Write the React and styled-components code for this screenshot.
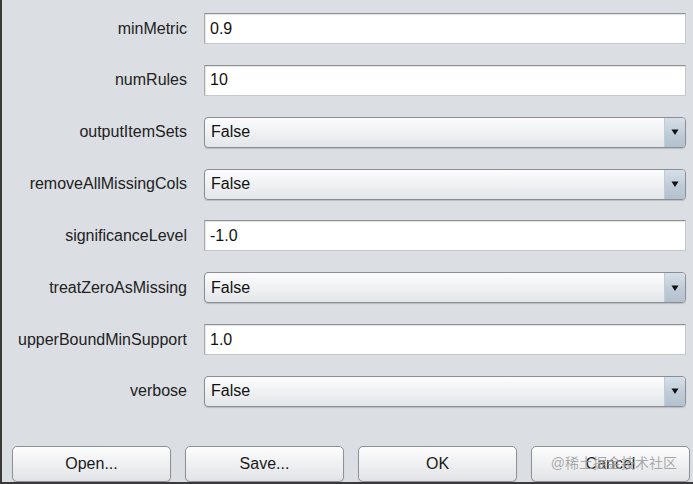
import React from "react";
import styled, { createGlobalStyle } from "styled-components";

const Global = createGlobalStyle`
  html, body {
    margin: 0;
    padding: 0;
    overflow: hidden;
    background: #dbdee3;
  }
  * { box-sizing: border-box; }
`;

const Frame = styled.div`
  position: relative;
  width: 693px;
  height: 484px;
  overflow: hidden;
  background: #dbdee3;
  border-left: 2px solid #3a3a3a;
  border-bottom: 2px solid #3a3a3a;
  font-family: "Liberation Sans", Arial, sans-serif;
  display: flex;
  flex-direction: column;
`;

const Form = styled.div`
  display: grid;
  grid-template-columns: 185px 482px;
  grid-auto-rows: 31px;
  column-gap: 17px;
  row-gap: 20.85px;
  padding-top: 13px;
`;

const Label = styled.div`
  display: flex;
  align-items: center;
  justify-content: flex-end;
  font-size: 16px;
  color: #222;
  white-space: nowrap;
`;

const TextField = styled.div`
  display: flex;
  align-items: center;
  padding-left: 5px;
  background: #fff;
  border: 1px solid #c4c7cc;
  border-top-color: #8e9297;
  border-left-color: #a9adb2;
  box-shadow: inset 1px 1px 1px rgba(0, 0, 0, 0.12);
  font-size: 16px;
  color: #111;
`;

const Combo = styled.div`
  display: flex;
  align-items: stretch;
  border: 1px solid #8a8e94;
  border-radius: 4px;
  background: linear-gradient(#fcfcfd, #eef0f2 55%, #e3e6e9);
  box-shadow: 0 1px 1px rgba(0, 0, 0, 0.15);
  overflow: hidden;
`;

const ComboValue = styled.div`
  flex: 1;
  display: flex;
  align-items: center;
  padding-left: 6px;
  font-size: 16px;
  color: #111;
`;

const ArrowBox = styled.div`
  width: 21px;
  display: flex;
  align-items: center;
  justify-content: center;
  border-left: 1px solid #c3cbd3;
  background: linear-gradient(#d6dfe8, #bfccd8 55%, #b3c1ce);
`;

const ButtonBar = styled.div`
  display: flex;
  gap: 14px;
  padding-left: 10px;
  margin-top: 39px;
`;

const Button = styled.div`
  flex: 0 0 159px;
  height: 36px;
  display: flex;
  align-items: center;
  justify-content: center;
  border: 1px solid #8d9197;
  border-radius: 5px;
  background: linear-gradient(#fdfdfd, #eff0f2 50%, #e1e3e6);
  box-shadow: 0 1px 1px rgba(0, 0, 0, 0.12);
  font-size: 16px;
  color: #1a1a1a;
`;

const Watermark = styled.div`
  position: absolute;
  right: 16px;
  bottom: 10px;
  font-family: "Liberation Sans", "Noto Sans CJK SC", sans-serif;
  font-size: 14px;
  color: rgba(140, 140, 140, 0.75);
  text-shadow: 0 0 1px rgba(255, 255, 255, 0.6);
  pointer-events: none;
`;

const Arrow = () => (
  <svg width="8" height="8" viewBox="0 0 8 8">
    <path d="M0.5 1.5 L7.5 1.5 L4 7 Z" fill="#111" />
  </svg>
);

const fields = [
  { name: "minMetric", kind: "text", value: "0.9" },
  { name: "numRules", kind: "text", value: "10" },
  { name: "outputItemSets", kind: "combo", value: "False" },
  { name: "removeAllMissingCols", kind: "combo", value: "False" },
  { name: "significanceLevel", kind: "text", value: "-1.0" },
  { name: "treatZeroAsMissing", kind: "combo", value: "False" },
  { name: "upperBoundMinSupport", kind: "text", value: "1.0" },
  { name: "verbose", kind: "combo", value: "False" },
];

export default function App() {
  return (
    <>
      <Global />
      <Frame>
        <Form>
          {fields.map((f) => (
            <React.Fragment key={f.name}>
              <Label>{f.name}</Label>
              {f.kind === "text" ? (
                <TextField>{f.value}</TextField>
              ) : (
                <Combo>
                  <ComboValue>{f.value}</ComboValue>
                  <ArrowBox>
                    <Arrow />
                  </ArrowBox>
                </Combo>
              )}
            </React.Fragment>
          ))}
        </Form>
        <ButtonBar>
          <Button>Open...</Button>
          <Button>Save...</Button>
          <Button>OK</Button>
          <Button>Cancel</Button>
        </ButtonBar>
        <Watermark>@稀土掘金技术社区</Watermark>
      </Frame>
    </>
  );
}
